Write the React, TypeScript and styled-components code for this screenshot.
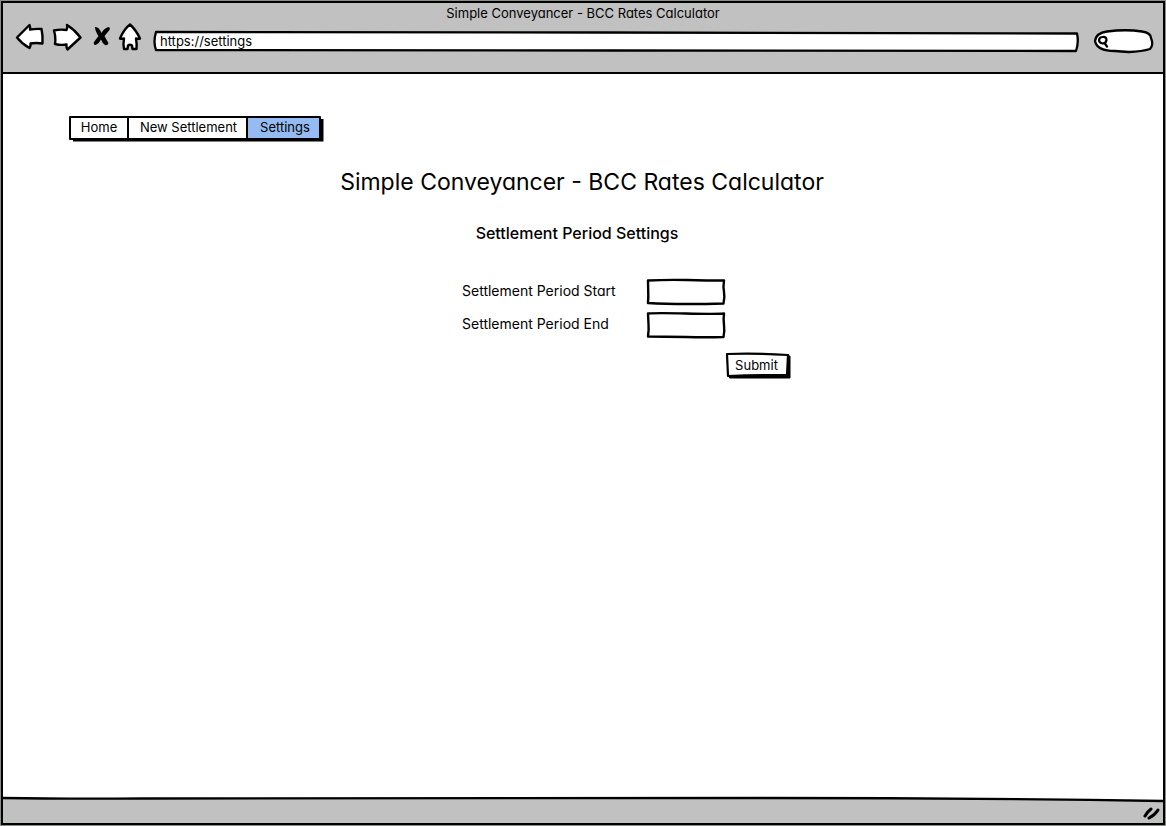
import React from "react";
import styled, { createGlobalStyle } from "styled-components";

const GlobalStyle = createGlobalStyle`
  *, *::before, *::after { box-sizing: border-box; }
  body {
    margin: 0;
    background: #fff;
    color: #000;
    font-family: Inter, "Liberation Sans", sans-serif;
    font-feature-settings: "cv11" 1;
    font-size: 13px;
    line-height: 16px;
  }
  button, input { font: inherit; font-feature-settings: inherit; color: inherit; }
`;

const Page = styled.div`
  min-height: 100vh;
  padding: 1px;
  display: flex;
  background: #8a8d8a;
`;

const Window = styled.div`
  flex: 1;
  display: flex;
  flex-direction: column;
  border: 2px solid #000;
  background: #fff;
`;

const Chrome = styled.header`
  height: 71px;
  background: #c1c1c1;
  border-bottom: 2px solid #000;
`;

const WindowTitle = styled.div`
  height: 17px;
  padding-top: 2px;
  text-align: center;
`;

const Toolbar = styled.div`
  display: flex;
  align-items: center;
  padding: 0 10px 0 12px;
`;

const ToolButton = styled.button<{ $width: number; $gap: number }>`
  width: ${(p) => p.$width}px;
  height: 30px;
  margin-right: ${(p) => p.$gap}px;
  padding: 0;
  border: 0;
  background: none;
  svg { display: block; }
`;

const Outline = styled.svg`
  position: absolute;
  inset: 0;
  width: 100%;
  height: 100%;
  overflow: visible;
  pointer-events: none;
`;

const Ink = styled.path`
  stroke: #000;
  stroke-linejoin: round;
  stroke-linecap: round;
  vector-effect: non-scaling-stroke;
`;

const AddressBar = styled.div`
  position: relative;
  flex: 1;
  height: 20px;
  margin: 10px 16px 0 0;
`;

const SearchBox = styled.div`
  position: relative;
  width: 59px;
  height: 24px;
  margin-top: 9px;
`;

const BareInput = styled.input`
  position: relative;
  display: block;
  width: 100%;
  height: 100%;
  padding: 0 6px 2px;
  border: 0;
  outline: 0;
  background: transparent;
`;

const SearchInput = styled(BareInput)`
  padding: 0 10px 0 18px;
`;

const SearchGlyph = styled.svg`
  position: absolute;
  left: 3px;
  top: 6px;
`;

const Main = styled.main`
  flex: 1;
  padding: 42px 0 0;
`;

const Tabs = styled.nav`
  position: relative;
  width: 255px;
  height: 25px;
  margin-left: 66px;
  display: flex;
`;

const Tab = styled.a<{ $width: number; $active?: boolean }>`
  position: relative;
  width: ${(p) => p.$width}px;
  height: 24px;
  padding-left: 2px;
  line-height: 23px;
  text-align: center;
  text-decoration: none;
  color: #000;
  background: ${(p) => (p.$active ? "#95bbf2" : "#fff")};
  & + & { border-left: 2px solid #000; }
`;

const Heading = styled.h1`
  margin: 25px 0 0;
  padding-right: 2px;
  font-size: 23px;
  line-height: 32px;
  font-weight: 400;
  text-align: center;
`;

const SubHeading = styled.h2`
  margin: 25px 0 0;
  padding-right: 12px;
  font-size: 16px;
  line-height: 20px;
  font-weight: 500;
  text-align: center;
`;

const Form = styled.form`
  width: 416px;
  margin: 36px auto 0;
  padding-left: 87px;
`;

const Field = styled.div`
  display: grid;
  grid-template-columns: 185px 78px;
  height: 33px;
  label {
    font-size: 14px;
    line-height: 24px;
  }
`;

const FieldBox = styled.div`
  position: relative;
  height: 26px;
`;

const SubmitRow = styled.div`
  display: flex;
  justify-content: flex-end;
  margin-top: 8px;
`;

const SubmitButton = styled.button`
  position: relative;
  width: 65px;
  height: 26px;
  padding: 0 4px 2px 0;
  border: 0;
  background: none;
  span { position: relative; }
`;

const StatusBar = styled.footer`
  position: relative;
  height: 25px;
  display: flex;
  align-items: flex-end;
  justify-content: flex-end;
  padding: 0 2px 2px;
  background: #c1c1c1;
`;

const Grip = styled.svg`
  position: relative;
  display: block;
`;

const stroke = {
  fill: "#fff",
  stroke: "#000",
  strokeWidth: 2.4,
  strokeLinejoin: "round" as const,
  strokeLinecap: "round" as const,
};

const fieldShapes = [
  "M1 1.5 Q20 0.500 40 1 T77 1.500 Q76 8 77 13 T76.500 24.500 Q60 25 39 25 T1 24 Q1.500 17 1.200 12 Z",
  "M1 1.5 Q10 0.800 39 1.500 T77 1.500 Q76.200 7 77 13 T76.500 25 Q60 25.500 39 25 T1 24.500 Q2 18 1.500 12 Z",
];

function FieldRow({ id, label, shape }: { id: string; label: string; shape: string }) {
  return (
    <Field>
      <label htmlFor={id}>{label}</label>
      <FieldBox>
        <Outline viewBox="0 0 78 26" preserveAspectRatio="none" aria-hidden="true">
          <Ink d={shape} fill="#fff" strokeWidth="2.4" />
        </Outline>
        <BareInput id={id} type="text" />
      </FieldBox>
    </Field>
  );
}

export default function App() {
  return (
    <>
      <GlobalStyle />
      <Page>
        <Window>
          <Chrome>
            <WindowTitle>Simple Conveyancer - BCC Rates Calculator</WindowTitle>
            <Toolbar>
              <ToolButton type="button" aria-label="Back" $width={30} $gap={7}>
                <svg width="30" height="30" viewBox="15 22 30 30">
                  <path {...stroke} d="M17 37.500 L29.500 25 Q30.500 27 30 29.500 Q36 28.500 41.500 29 Q43 36 42.500 43.500 Q36 42.500 30.500 43.500 Q31 46 29.500 48 Q22 44 17 37.500 Z" />
                </svg>
              </ToolButton>
              <ToolButton type="button" aria-label="Forward" $width={30} $gap={11}>
                <svg width="30" height="30" viewBox="52 22 30 30">
                  <path {...stroke} d="M54 30.500 Q60 29 66.500 30 Q67.500 28 67 25 Q75 30 80.500 37.500 L67.500 49.500 Q66 47 66.500 44.500 Q61 45.500 55 44 Q56 37 54 30.500 Z" />
                </svg>
              </ToolButton>
              <ToolButton type="button" aria-label="Stop" $width={18} $gap={7}>
                <svg width="18" height="30" viewBox="93 22 18 30">
                  <path d="M95 27 Q99 26.500 101.500 33 Q104 28 109 27 Q110.500 28 109.500 30 L104.500 36 Q107 41 108.500 43 Q107.500 46 105 45 Q102.500 43.500 101 39.500 Q98.500 44 95.500 45 Q93 44.500 94 42 L98.500 36 Q95 31 95 27 Z" />
                </svg>
              </ToolButton>
              <ToolButton type="button" aria-label="Home" $width={24} $gap={12}>
                <svg width="24" height="30" viewBox="118 22 24 30">
                  <path {...stroke} d="M130 24.500 Q136 30 140 38.500 Q138 39 136 38.500 Q137 44 136.500 49 L132.500 49 L132 45.500 Q130 44 128 45.500 L127.500 49 L124 49 Q123 44 124 38.500 Q122 39 120 38.500 Q124 29 130 24.500 Z" />
                </svg>
              </ToolButton>
              <AddressBar>
                <Outline viewBox="0 0 924 20" preserveAspectRatio="none" aria-hidden="true">
                  <Ink fill="#fff" strokeWidth="2.300" d="M2 0 Q250 -0.500 450 0.500 T923 1.500 Q925 10 922 19 Q700 19.500 460 18.500 T2 18 Q-1 10 2 0 Z" />
                </Outline>
                <BareInput type="text" aria-label="Address" defaultValue="https://settings" />
              </AddressBar>
              <SearchBox>
                <Outline viewBox="0 0 59 24" preserveAspectRatio="none" aria-hidden="true">
                  <Ink fill="#fff" strokeWidth="2.300" d="M1 12 Q2 4 13 2.500 Q32 0 48 2.500 Q57 4 57 9 Q60 16 56 20 Q48 22.500 35 23 Q27 22.500 21 22 Q3 22 1 12 Z" />
                </Outline>
                <SearchGlyph width="12" height="13" viewBox="0 0 12 13" aria-hidden="true">
                  <path d="M5.500 2 Q9.500 1.500 9.500 5 Q9 8.500 5.500 8.500 Q2 8 2 5 Q2.500 2 5.500 2 M7.500 8 L10 11.500" fill="none" stroke="#000" strokeWidth="2.200" strokeLinecap="round" />
                </SearchGlyph>
                <SearchInput type="text" aria-label="Search" />
              </SearchBox>
            </Toolbar>
          </Chrome>

          <Main>
            <Tabs>
              <Tab href="#home" $width={58}>Home</Tab>
              <Tab href="#new" $width={119}>New Settlement</Tab>
              <Tab href="#settings" $width={74} $active>Settings</Tab>
              <Outline viewBox="0 0 255 25" preserveAspectRatio="none" aria-hidden="true">
                <Ink fill="none" strokeWidth="2" d="M1 1 Q120 0.500 251 1 L251 23 Q100 23.500 1 23 Z" />
                <path fill="none" stroke="#000" strokeWidth="3" d="M4 24 L253 24 L253 3" />
              </Outline>
            </Tabs>
            <Heading>Simple Conveyancer - BCC Rates Calculator</Heading>
            <SubHeading>Settlement Period Settings</SubHeading>
            <Form onSubmit={(e) => e.preventDefault()}>
              <FieldRow id="period-start" label="Settlement Period Start" shape={fieldShapes[0]} />
              <FieldRow id="period-end" label="Settlement Period End" shape={fieldShapes[1]} />
              <SubmitRow>
                <SubmitButton type="submit">
                  <Outline viewBox="0 0 65 26" preserveAspectRatio="none" aria-hidden="true">
                    <Ink fill="#000" strokeWidth="1" d="M4 4 L64 3 L64 25 L4 25 Z" />
                    <Ink fill="#fff" strokeWidth="2.200" d="M1 1 Q30 0 62 2 L61 22 Q30 22 2 23 Z" />
                  </Outline>
                  <span>Submit</span>
                </SubmitButton>
              </SubmitRow>
            </Form>
          </Main>

          <StatusBar>
            <Outline viewBox="0 0 1160 25" preserveAspectRatio="none" aria-hidden="true">
              <path fill="#fff" d="M0 0 L760 0 Q960 0 1160 3 L1160 -1 L0 -1 Z" />
              <Ink fill="none" strokeWidth="2.300" d="M0 0 Q60 1 140 0.500 L760 0 Q960 0 1160 3" />
            </Outline>
            <Grip width="18" height="14" viewBox="0 0 18 14" aria-hidden="true">
              <path d="M2 9 Q4 5 8 2 M6 11 Q12 8 15 3" fill="none" stroke="#000" strokeWidth="3" strokeLinecap="round" />
            </Grip>
          </StatusBar>
        </Window>
      </Page>
    </>
  );
}
